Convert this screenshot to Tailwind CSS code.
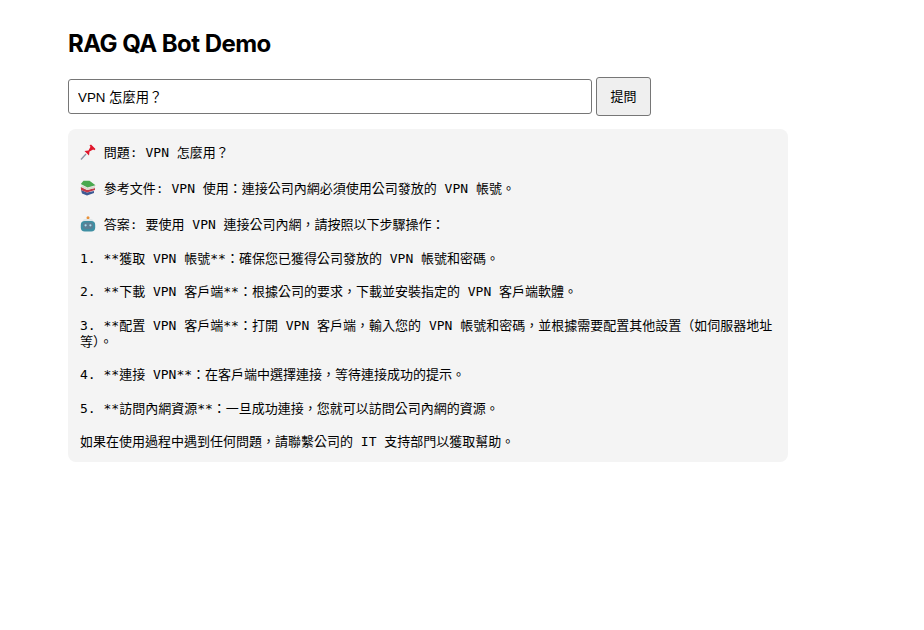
<!DOCTYPE html>
<html lang="zh-Hant">
<head>
  <meta charset="UTF-8" />
  <title>RAG QA Bot Demo</title>
  <script src="https://cdn.jsdelivr.net/npm/@tailwindcss/browser@4"></script>
</head>
<body class="bg-white text-black font-['Liberation_Sans','Noto_Sans_CJK_TC',sans-serif]">
  <main class="w-[720px] ml-[68px] pt-[30px]">
    <h1 class="text-2xl font-['Inter',sans-serif] font-bold tracking-[-0.55px] leading-[28px] mb-[19px]">RAG QA Bot Demo</h1>

    <form class="flex items-center gap-1 mb-[13px]">
      <input type="text" value="VPN 怎麼用？" class="w-[524px] h-[35px] px-[9px] border border-[#767676] rounded-[3px] text-[13.33px] text-black bg-white" />
      <button type="button" class="w-[55px] h-[39px] border border-[#767676] rounded-[3px] bg-[#efefef] text-[13px]">提問</button>
    </form>

    <pre class="bg-[#f4f4f4] rounded-lg px-3 pt-[14px] h-[333px] whitespace-pre-wrap text-[13px] leading-[16.6px] font-['DejaVu_Sans_Mono','Noto_Sans_CJK_TC',monospace]"><span class="block leading-[19.5px]"><svg class="inline-block w-4 h-4 align-[-3px]" viewBox="0 0 16 16" role="img" aria-label="pin"><path d="M1 15.5 6 10" stroke="#8a95a5" stroke-width="1.3"/><path d="M4.5 7 8.5 6.5 10.5 2.8 9.5 1.6 11 .5 15.5 5 14.4 6.2 13.2 5.5 9.5 7.5 9 11.5Z" fill="#e0162b"/></svg> 問題: VPN 怎麼用？</span>
<span class="block leading-[19.5px]"><svg class="inline-block w-4 h-4 align-[-3px]" viewBox="0 0 16 16" role="img" aria-label="books"><path d="M1 10 7 12.5 14 11V13L7 15.5 2 13.5Z" fill="#3d5a94"/><path d="M.8 7 7 10 15 8V10L7 12.5 1 10Z" fill="#c23a4a"/><path d="M1.5 5 7.5 8 15 6V8L7.5 10 1.5 7Z" fill="#dcd9cf"/><path d="M3.5 .8 9.5 .8 15.5 5.2 7.5 7.5 .8 4Z" fill="#4aa84f"/></svg> 參考文件: VPN 使用：連接公司內網必須使用公司發放的 VPN 帳號。</span>
<span class="block leading-[19.5px]"><svg class="inline-block w-4 h-4 align-[-3px]" viewBox="0 0 16 16" role="img" aria-label="robot"><circle cx="8" cy="1.8" r="1.5" fill="#e8913a"/><rect x="3" y="3" width="10" height="4" rx="2" fill="#dfe6e8"/><rect x=".8" y="5" width="14.4" height="10.5" rx="4" fill="#3f8fa3"/><rect x="3" y="6.5" width="10" height="6.5" rx="3" fill="#5d7f94"/><circle cx="5.6" cy="9.3" r="1.1" fill="#a8e0f0"/><circle cx="10.4" cy="9.3" r="1.1" fill="#a8e0f0"/></svg> 答案: 要使用 VPN 連接公司內網，請按照以下步驟操作：</span>
1. **獲取 VPN 帳號**：確保您已獲得公司發放的 VPN 帳號和密碼。

2. **下載 VPN 客戶端**：根據公司的要求，下載並安裝指定的 VPN 客戶端軟體。

3. **配置 VPN 客戶端**：打開 VPN 客戶端，輸入您的 VPN 帳號和密碼，並根據需要配置其他設置（如伺服器地址等）。

4. **連接 VPN**：在客戶端中選擇連接，等待連接成功的提示。

5. **訪問內網資源**：一旦成功連接，您就可以訪問公司內網的資源。

如果在使用過程中遇到任何問題，請聯繫公司的 IT 支持部門以獲取幫助。</pre>
  </main>
</body>
</html>
